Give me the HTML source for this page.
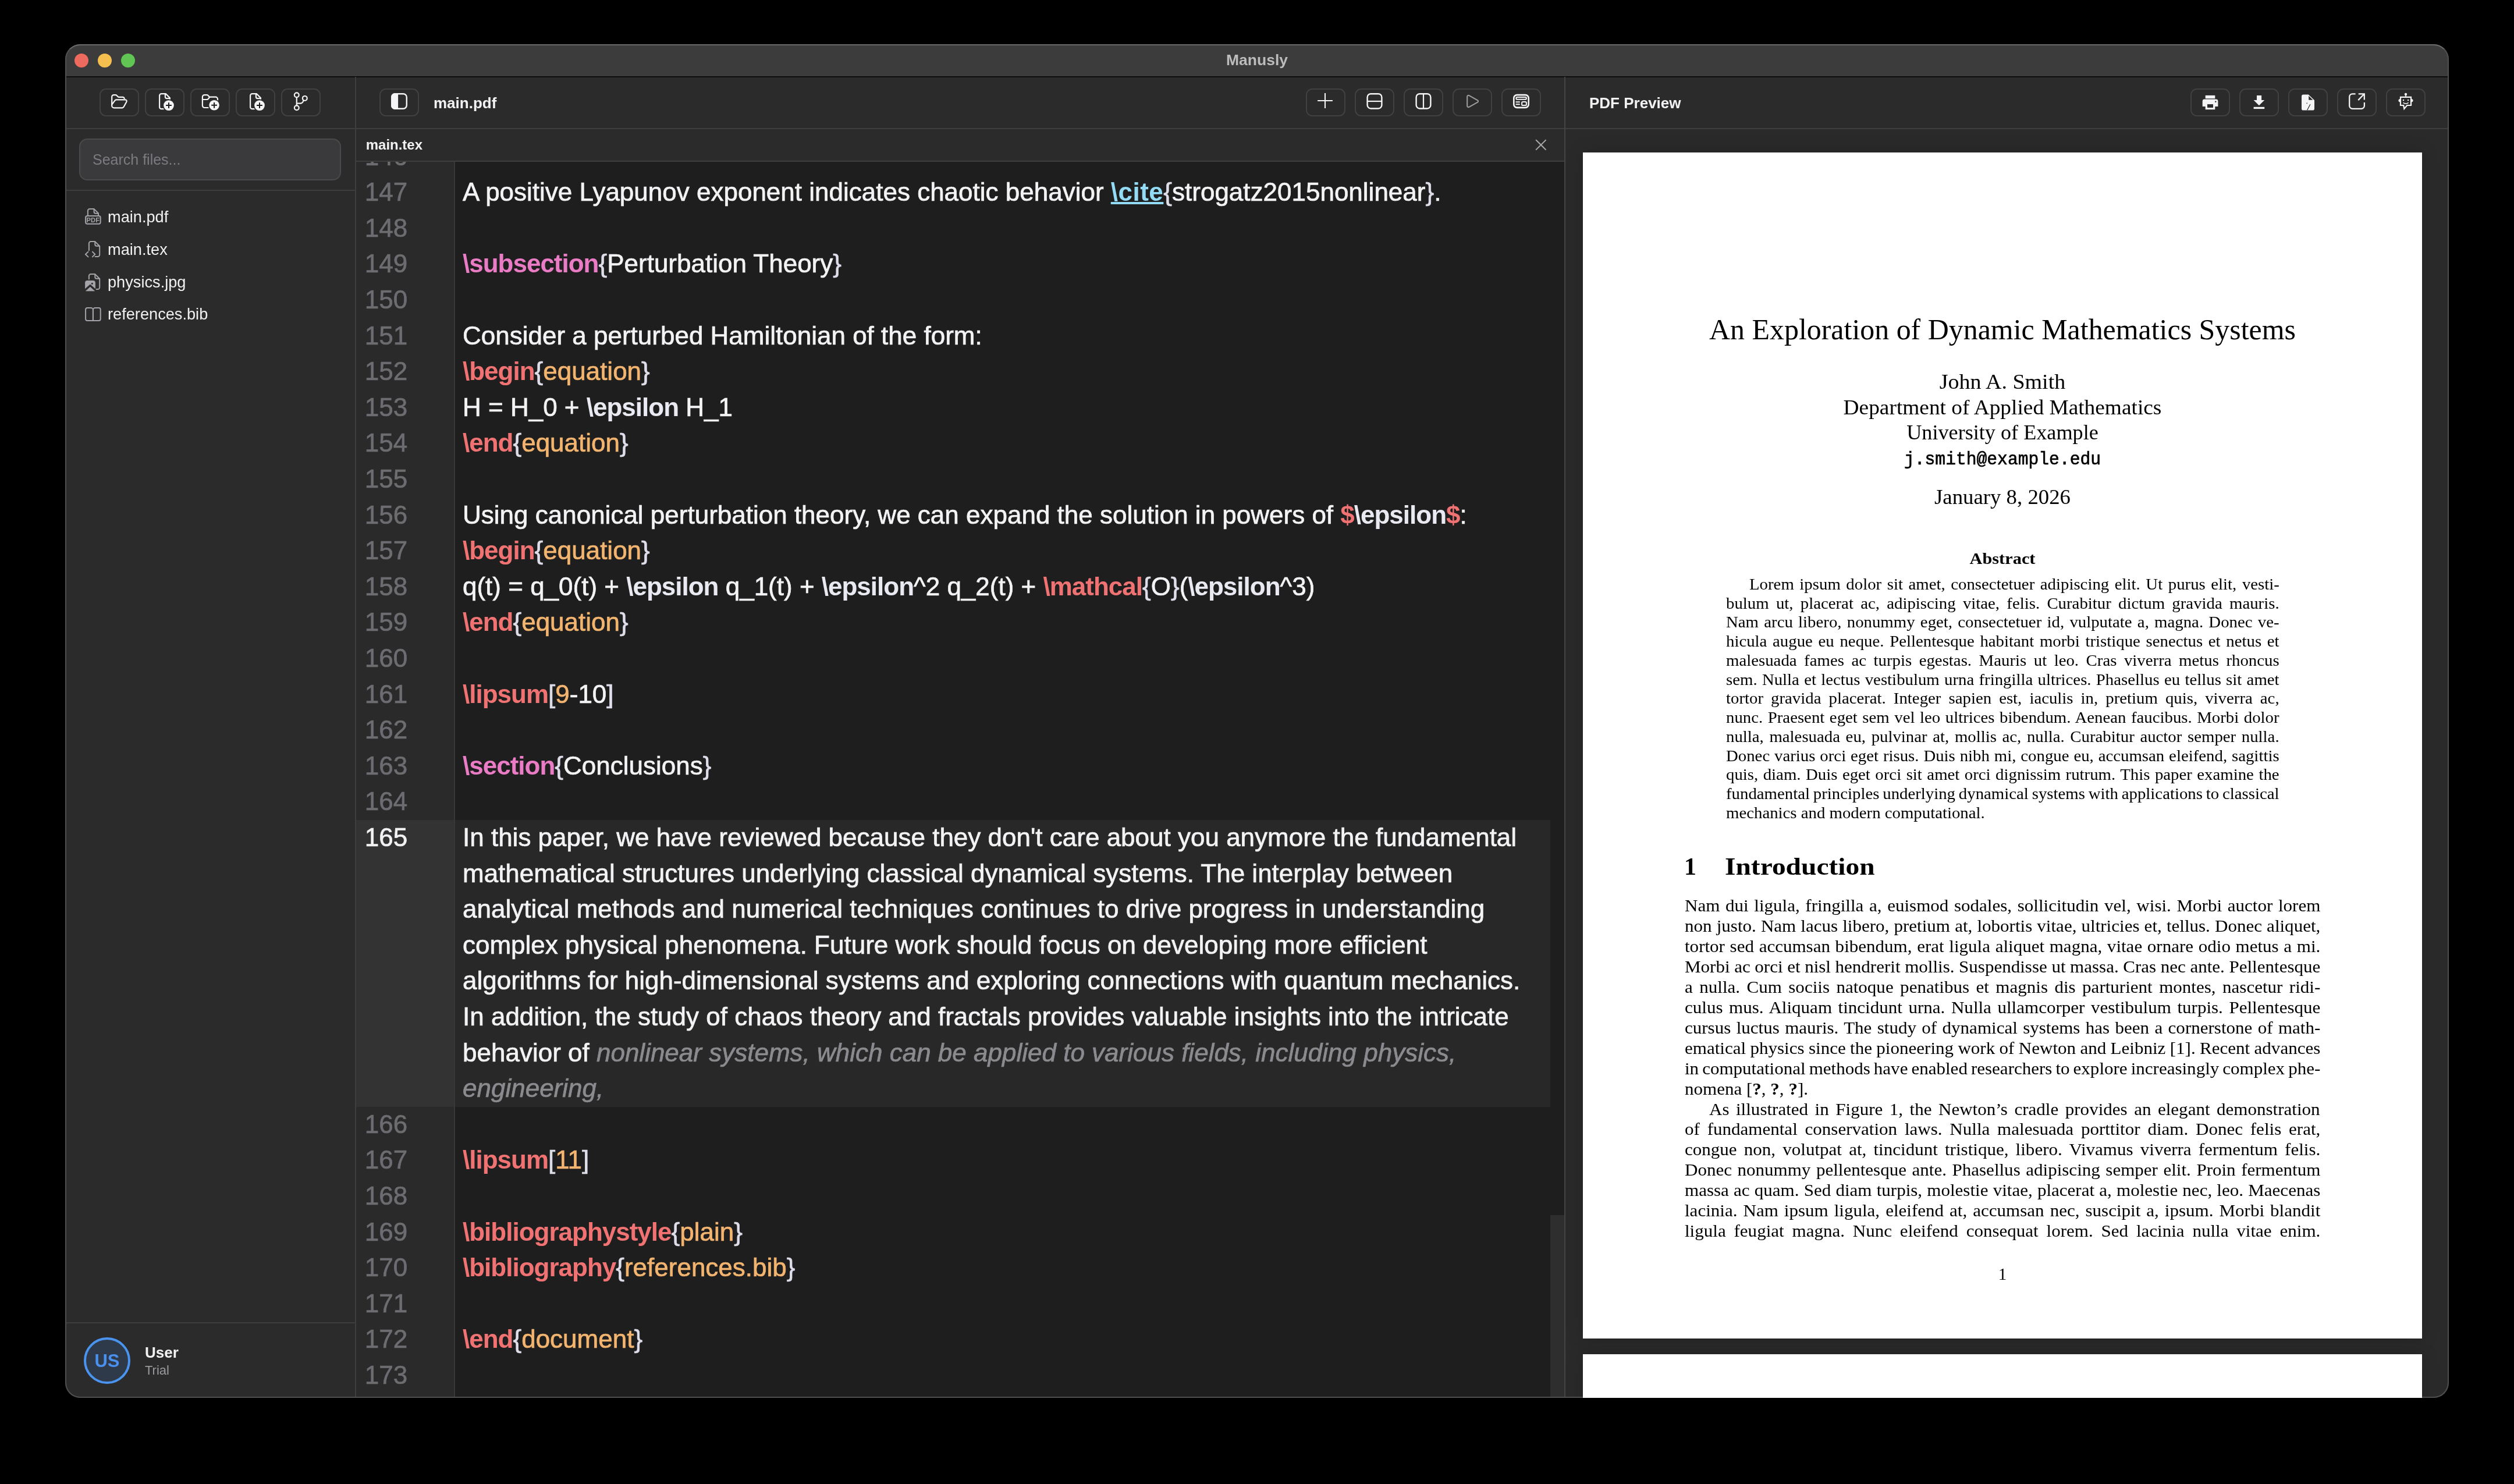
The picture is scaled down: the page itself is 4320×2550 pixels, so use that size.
<!DOCTYPE html><html><head><meta charset="utf-8"><style>
html,body{margin:0;padding:0;background:#000;width:4320px;height:2550px;overflow:hidden;}
*{box-sizing:border-box;}
body{font-family:"Liberation Sans",sans-serif;position:relative;}
#win{position:absolute;will-change:transform;left:112px;top:76px;width:4096px;height:2326px;border-radius:26px;background:#2b2b2b;overflow:hidden;}
#winborder{position:absolute;left:112px;top:76px;width:4096px;height:2326px;border-radius:26px;border:2px solid #4f4f4f;border-top-color:#6b6b6b;}
.a{position:absolute;}
.dot{position:absolute;width:24px;height:24px;border-radius:50%;}
.btn{position:absolute;width:68px;height:48px;border:2px solid #414141;border-radius:11px;}
.t{position:absolute;white-space:pre;line-height:1;}
svg{position:absolute;overflow:visible;}

.code{position:absolute;white-space:pre;font-size:44px;line-height:61.6px;color:#f3f3f5;-webkit-text-stroke-width:0.7px;}
.ln{position:absolute;white-space:pre;font-size:44px;line-height:61.6px;-webkit-text-stroke-width:0.7px;}
.kw{color:#f07272;font-weight:bold;letter-spacing:-1px;-webkit-text-stroke-width:0;}
.sec{color:#ea7bc5;font-weight:bold;letter-spacing:-1px;-webkit-text-stroke-width:0;}
.arg{color:#f2b46f;}
.br{color:#dedeea;}
.ep{color:#e9e9f2;font-weight:bold;letter-spacing:-1px;-webkit-text-stroke-width:0;}
.cite{color:#93dbf4;font-weight:bold;letter-spacing:0.5px;-webkit-text-stroke-width:0;text-decoration:underline;text-decoration-thickness:4.4px;text-underline-offset:2px;}
.gh{color:#8b8b8f;font-style:italic;}
#edclip{position:absolute;overflow:hidden;}
.pt{position:absolute;white-space:nowrap;line-height:1;color:#000;font-family:'Liberation Serif',serif;}</style></head><body><div id="win"><div class="a" style="left:0px;top:0px;width:4096px;height:55px;background:#3c3c3c;"></div>
<div class="a" style="left:0px;top:55px;width:4096px;height:2px;background:#0d0d0d;"></div>
<div class="dot" style="left:16px;top:16px;background:#ed6a5e;"></div>
<div class="dot" style="left:56px;top:16px;background:#f5bf4f;"></div>
<div class="dot" style="left:96px;top:16px;background:#61c554;"></div>
<div class="t" style="left:0;width:4096px;text-align:center;top:13.57px;font-size:26.5px;font-weight:bold;color:#bcbcbc;">Manusly</div>
<div class="a" style="left:0px;top:57px;width:4096px;height:87px;background:#2b2b2b;"></div>
<div class="a" style="left:0px;top:144px;width:4096px;height:2px;background:#3e3e3e;"></div>
<div class="a" style="left:498px;top:56px;width:2px;height:2270px;background:#3e3e3e;"></div>
<div class="a" style="left:2576px;top:56px;width:2px;height:2272px;background:#444444;"></div>
<div class="btn" style="left:59px;top:76px;"></div>
<div class="btn" style="left:137px;top:76px;"></div>
<div class="btn" style="left:215px;top:76px;"></div>
<div class="btn" style="left:293px;top:76px;"></div>
<div class="btn" style="left:371px;top:76px;"></div>
<div class="a" style="left:0px;top:250px;width:498px;height:2px;background:#3e3e3e;"></div>
<div class="a" style="left:24px;top:162px;width:450px;height:72px;background:#3a3a3c;border:2px solid #4a4a4c;border-radius:14px;"></div>
<div class="t" style="left:47px;top:185.84px;font-size:25px;color:#7b7b80;">Search files...</div>
<div class="t" style="left:73px;top:282.98px;font-size:27.2px;color:#f0f0f2;">main.pdf</div>
<div class="t" style="left:73px;top:338.78px;font-size:27.2px;color:#f0f0f2;">main.tex</div>
<div class="t" style="left:73px;top:394.58px;font-size:27.2px;color:#f0f0f2;">physics.jpg</div>
<div class="t" style="left:73px;top:450.38px;font-size:27.2px;color:#f0f0f2;">references.bib</div>
<div class="a" style="left:0px;top:2196px;width:498px;height:2px;background:#3e3e3e;"></div>
<div class="a" style="left:32px;top:2222px;width:80px;height:80px;border-radius:50%;background:#2e3949;border:4px solid #4a94f0;"></div>
<div class="t" style="left:32px;width:80px;text-align:center;top:2247.06px;font-size:31px;font-weight:bold;color:#4a90ee;">US</div>
<div class="t" style="left:137px;top:2235.19px;font-size:26px;font-weight:bold;color:#f2f2f2;">User</div>
<div class="t" style="left:137px;top:2268.18px;font-size:22px;color:#9a9a9e;">Trial</div>
<div class="btn" style="left:540px;top:76px;"></div>
<div class="t" style="left:633px;top:87.99px;font-size:26px;font-weight:bold;color:#f2f2f4;">main.pdf</div>
<div class="btn" style="left:2132px;top:76px;"></div>
<div class="btn" style="left:2216px;top:76px;"></div>
<div class="btn" style="left:2300px;top:76px;"></div>
<div class="btn" style="left:2384px;top:76px;"></div>
<div class="btn" style="left:2468px;top:76px;"></div>
<div class="a" style="left:500px;top:200px;width:2076px;height:2px;background:#3e3e3e;"></div>
<div class="t" style="left:516.7px;top:161.48px;font-size:24px;font-weight:bold;color:#f2f2f4;">main.tex</div>
<div class="t" style="left:2619px;top:88.29px;font-size:26px;font-weight:bold;color:#f2f2f4;">PDF Preview</div>
<div class="btn" style="left:3652px;top:76px;"></div>
<div class="btn" style="left:3736px;top:76px;"></div>
<div class="btn" style="left:3820px;top:76px;"></div>
<div class="btn" style="left:3904px;top:76px;"></div>
<div class="btn" style="left:3988px;top:76px;"></div>
<div class="a" style="left:500px;top:202px;width:2076px;height:2130px;background:#1e1e1e;"></div>
<div class="a" style="left:500px;top:202px;width:168px;height:2130px;background:#2a2a2a;"></div>
<div id="edclip" style="left:500px;top:202px;width:2052px;height:2122px;"><div class="ln" style="left:14.8px;top:-40.35px;color:#6c6c71;">146</div>
<div class="code" style="left:183px;top:-40.35px;"></div>
<div class="ln" style="left:14.8px;top:21.25px;color:#6c6c71;">147</div>
<div class="code" style="left:183px;top:21.25px;">A positive Lyapunov exponent indicates chaotic behavior <span class="cite">\cite</span><span class="br">{</span>strogatz2015nonlinear<span class="br">}</span>.</div>
<div class="ln" style="left:14.8px;top:82.85px;color:#6c6c71;">148</div>
<div class="code" style="left:183px;top:82.85px;"></div>
<div class="ln" style="left:14.8px;top:144.45px;color:#6c6c71;">149</div>
<div class="code" style="left:183px;top:144.45px;"><span class="sec">\subsection</span><span class="br">{</span>Perturbation Theory<span class="br">}</span></div>
<div class="ln" style="left:14.8px;top:206.05px;color:#6c6c71;">150</div>
<div class="code" style="left:183px;top:206.05px;"></div>
<div class="ln" style="left:14.8px;top:267.65px;color:#6c6c71;">151</div>
<div class="code" style="left:183px;top:267.65px;">Consider a perturbed Hamiltonian of the form:</div>
<div class="ln" style="left:14.8px;top:329.25px;color:#6c6c71;">152</div>
<div class="code" style="left:183px;top:329.25px;"><span class="kw">\begin</span><span class="br">{</span><span class="arg">equation</span><span class="br">}</span></div>
<div class="ln" style="left:14.8px;top:390.85px;color:#6c6c71;">153</div>
<div class="code" style="left:183px;top:390.85px;">H = H_0 + <span class="ep">\epsilon</span> H_1</div>
<div class="ln" style="left:14.8px;top:452.45px;color:#6c6c71;">154</div>
<div class="code" style="left:183px;top:452.45px;"><span class="kw">\end</span><span class="br">{</span><span class="arg">equation</span><span class="br">}</span></div>
<div class="ln" style="left:14.8px;top:514.05px;color:#6c6c71;">155</div>
<div class="code" style="left:183px;top:514.05px;"></div>
<div class="ln" style="left:14.8px;top:575.65px;color:#6c6c71;">156</div>
<div class="code" style="left:183px;top:575.65px;">Using canonical perturbation theory, we can expand the solution in powers of <span class="kw">$</span><span class="ep">\epsilon</span><span class="kw">$</span>:</div>
<div class="ln" style="left:14.8px;top:637.25px;color:#6c6c71;">157</div>
<div class="code" style="left:183px;top:637.25px;"><span class="kw">\begin</span><span class="br">{</span><span class="arg">equation</span><span class="br">}</span></div>
<div class="ln" style="left:14.8px;top:698.85px;color:#6c6c71;">158</div>
<div class="code" style="left:183px;top:698.85px;">q(t) = q_0(t) + <span class="ep">\epsilon</span> q_1(t) + <span class="ep">\epsilon</span>^2 q_2(t) + <span class="kw">\mathcal</span><span class="br">{</span>O<span class="br">}</span>(<span class="ep">\epsilon</span>^3)</div>
<div class="ln" style="left:14.8px;top:760.45px;color:#6c6c71;">159</div>
<div class="code" style="left:183px;top:760.45px;"><span class="kw">\end</span><span class="br">{</span><span class="arg">equation</span><span class="br">}</span></div>
<div class="ln" style="left:14.8px;top:822.05px;color:#6c6c71;">160</div>
<div class="code" style="left:183px;top:822.05px;"></div>
<div class="ln" style="left:14.8px;top:883.65px;color:#6c6c71;">161</div>
<div class="code" style="left:183px;top:883.65px;"><span class="kw">\lipsum</span><span class="br">[</span><span class="arg">9</span>-10<span class="br">]</span></div>
<div class="ln" style="left:14.8px;top:945.25px;color:#6c6c71;">162</div>
<div class="code" style="left:183px;top:945.25px;"></div>
<div class="ln" style="left:14.8px;top:1006.85px;color:#6c6c71;">163</div>
<div class="code" style="left:183px;top:1006.85px;"><span class="sec">\section</span><span class="br">{</span>Conclusions<span class="br">}</span></div>
<div class="ln" style="left:14.8px;top:1068.45px;color:#6c6c71;">164</div>
<div class="code" style="left:183px;top:1068.45px;"></div>
<div class="a" style="left:170px;top:1131.0px;width:1882px;height:492.8px;background:#282828;"></div>
<div class="a" style="left:0px;top:1131.0px;width:168px;height:492.8px;background:#333333;"></div>
<div class="ln" style="left:14.8px;top:1130.05px;color:#f2f2f4;">165</div>
<div class="code" style="left:183px;top:1130.05px;">In this paper, we have reviewed because they don't care about you anymore the fundamental<br>mathematical structures underlying classical dynamical systems. The interplay between<br>analytical methods and numerical techniques continues to drive progress in understanding<br>complex physical phenomena. Future work should focus on developing more efficient<br>algorithms for high-dimensional systems and exploring connections with quantum mechanics.<br>In addition, the study of chaos theory and fractals provides valuable insights into the intricate<br>behavior of <span class="gh">nonlinear systems, which can be applied to various fields, including physics,</span><br><span class="gh">engineering,</span></div>
<div class="ln" style="left:14.8px;top:1622.85px;color:#6c6c71;">166</div>
<div class="code" style="left:183px;top:1622.85px;"></div>
<div class="ln" style="left:14.8px;top:1684.45px;color:#6c6c71;">167</div>
<div class="code" style="left:183px;top:1684.45px;"><span class="kw">\lipsum</span><span class="br">[</span><span class="arg">11</span><span class="br">]</span></div>
<div class="ln" style="left:14.8px;top:1746.05px;color:#6c6c71;">168</div>
<div class="code" style="left:183px;top:1746.05px;"></div>
<div class="ln" style="left:14.8px;top:1807.65px;color:#6c6c71;">169</div>
<div class="code" style="left:183px;top:1807.65px;"><span class="kw">\bibliographystyle</span><span class="br">{</span><span class="arg">plain</span><span class="br">}</span></div>
<div class="ln" style="left:14.8px;top:1869.25px;color:#6c6c71;">170</div>
<div class="code" style="left:183px;top:1869.25px;"><span class="kw">\bibliography</span><span class="br">{</span><span class="arg">references.bib</span><span class="br">}</span></div>
<div class="ln" style="left:14.8px;top:1930.85px;color:#6c6c71;">171</div>
<div class="code" style="left:183px;top:1930.85px;"></div>
<div class="ln" style="left:14.8px;top:1992.45px;color:#6c6c71;">172</div>
<div class="code" style="left:183px;top:1992.45px;"><span class="kw">\end</span><span class="br">{</span><span class="arg">document</span><span class="br">}</span></div>
<div class="ln" style="left:14.8px;top:2054.05px;color:#6c6c71;">173</div>
<div class="code" style="left:183px;top:2054.05px;"></div>
<div class="ln" style="left:14.8px;top:2115.65px;color:#6c6c71;">174</div>
<div class="code" style="left:183px;top:2115.65px;"></div>
<div class="a" style="left:168px;top:0;width:2px;height:2130px;background:#383838;"></div></div>
<div class="a" style="left:2552px;top:2012px;width:24px;height:320px;background:#2e2e2e;"></div>
<div class="a" style="left:2578px;top:146px;width:1516px;height:2180px;background:#2a2a2a;"></div>
<div class="a" style="left:2608px;top:186px;width:1442px;height:2038px;background:#ffffff;box-shadow:0 0 28px rgba(0,0,0,0.18);"></div>
<div class="a" style="left:2608px;top:2251px;width:1442px;height:200px;background:#ffffff;box-shadow:0 0 28px rgba(0,0,0,0.18);"></div>
<div class="pt" style="left:2608px;width:1442px;text-align:center;top:464.73px;font-size:50px;font-family:'Liberation Serif',serif;transform:scaleX(0.9985);transform-origin:50% 0;">An Exploration of Dynamic Mathematics Systems</div>
<div class="pt" style="left:2608px;width:1442px;text-align:center;top:563.19px;font-size:35px;font-family:'Liberation Serif',serif;transform:scaleX(1.086);transform-origin:50% 0;">John A. Smith</div>
<div class="pt" style="left:2608px;width:1442px;text-align:center;top:607.09px;font-size:35px;font-family:'Liberation Serif',serif;transform:scaleX(1.0675);transform-origin:50% 0;">Department of Applied Mathematics</div>
<div class="pt" style="left:2608px;width:1442px;text-align:center;top:649.99px;font-size:35px;font-family:'Liberation Serif',serif;transform:scaleX(1.0336);transform-origin:50% 0;">University of Example</div>
<div class="pt" style="left:2608px;width:1442px;text-align:center;top:697.77px;font-size:32px;font-family:'Liberation Mono',monospace;transform:scaleX(0.9264);transform-origin:50% 0;-webkit-text-stroke:0.7px #000;">j.smith@example.edu</div>
<div class="pt" style="left:2608px;width:1442px;text-align:center;top:760.89px;font-size:35px;font-family:'Liberation Serif',serif;transform:scaleX(1.051);transform-origin:50% 0;">January 8, 2026</div>
<div class="pt" style="left:2608px;width:1442px;text-align:center;top:870.99px;font-size:27px;font-family:'Liberation Serif',serif;transform:scaleX(1.1245);transform-origin:50% 0;"><b>Abstract</b></div>
<div class="pt" style="left:2893.6px;top:914.81px;font-size:26.5px;word-spacing:2.184px;transform:scaleX(1.087);transform-origin:0 0;">Lorem ipsum dolor sit amet, consectetuer adipiscing elit. Ut purus elit, vesti-</div>
<div class="pt" style="left:2853.9px;top:947.57px;font-size:26.5px;word-spacing:4.663px;transform:scaleX(1.087);transform-origin:0 0;">bulum ut, placerat ac, adipiscing vitae, felis. Curabitur dictum gravida mauris.</div>
<div class="pt" style="left:2853.9px;top:980.33px;font-size:26.5px;word-spacing:1.904px;transform:scaleX(1.087);transform-origin:0 0;">Nam arcu libero, nonummy eget, consectetuer id, vulputate a, magna. Donec ve-</div>
<div class="pt" style="left:2853.9px;top:1013.09px;font-size:26.5px;word-spacing:2.3px;transform:scaleX(1.087);transform-origin:0 0;">hicula augue eu neque. Pellentesque habitant morbi tristique senectus et netus et</div>
<div class="pt" style="left:2853.9px;top:1045.85px;font-size:26.5px;word-spacing:4.908px;transform:scaleX(1.087);transform-origin:0 0;">malesuada fames ac turpis egestas. Mauris ut leo. Cras viverra metus rhoncus</div>
<div class="pt" style="left:2853.9px;top:1078.61px;font-size:26.5px;word-spacing:0.998px;transform:scaleX(1.087);transform-origin:0 0;">sem. Nulla et lectus vestibulum urna fringilla ultrices. Phasellus eu tellus sit amet</div>
<div class="pt" style="left:2853.9px;top:1111.37px;font-size:26.5px;word-spacing:5.382px;transform:scaleX(1.087);transform-origin:0 0;">tortor gravida placerat. Integer sapien est, iaculis in, pretium quis, viverra ac,</div>
<div class="pt" style="left:2853.9px;top:1144.13px;font-size:26.5px;word-spacing:1.226px;transform:scaleX(1.087);transform-origin:0 0;">nunc. Praesent eget sem vel leo ultrices bibendum. Aenean faucibus. Morbi dolor</div>
<div class="pt" style="left:2853.9px;top:1176.89px;font-size:26.5px;word-spacing:2.232px;transform:scaleX(1.087);transform-origin:0 0;">nulla, malesuada eu, pulvinar at, mollis ac, nulla. Curabitur auctor semper nulla.</div>
<div class="pt" style="left:2853.9px;top:1209.65px;font-size:26.5px;word-spacing:0.634px;transform:scaleX(1.087);transform-origin:0 0;">Donec varius orci eget risus. Duis nibh mi, congue eu, accumsan eleifend, sagittis</div>
<div class="pt" style="left:2853.9px;top:1242.41px;font-size:26.5px;word-spacing:1.184px;transform:scaleX(1.087);transform-origin:0 0;">quis, diam. Duis eget orci sit amet orci dignissim rutrum. This paper examine the</div>
<div class="pt" style="left:2853.9px;top:1275.17px;font-size:26.5px;word-spacing:-1.26px;transform:scaleX(1.087);transform-origin:0 0;">fundamental principles underlying dynamical systems with applications to classical</div>
<div class="pt" style="left:2853.9px;top:1307.93px;font-size:26.5px;word-spacing:0px;transform:scaleX(1.087);transform-origin:0 0;">mechanics and modern computational.</div>
<div class="pt" style="left:2782px;top:1392.33px;font-size:42px;font-weight:bold;">1</div>
<div class="pt" style="left:2852px;top:1392.33px;font-size:42px;font-weight:bold;transform:scaleX(1.13);transform-origin:0 0;">Introduction</div>
<div class="pt" style="left:2782.7px;top:1466.11px;font-size:29px;word-spacing:1.776px;transform:scaleX(1.07);transform-origin:0 0;">Nam dui ligula, fringilla a, euismod sodales, sollicitudin vel, wisi. Morbi auctor lorem</div>
<div class="pt" style="left:2782.7px;top:1501.05px;font-size:29px;word-spacing:0.344px;transform:scaleX(1.07);transform-origin:0 0;">non justo. Nam lacus libero, pretium at, lobortis vitae, ultricies et, tellus. Donec aliquet,</div>
<div class="pt" style="left:2782.7px;top:1535.99px;font-size:29px;word-spacing:0.845px;transform:scaleX(1.07);transform-origin:0 0;">tortor sed accumsan bibendum, erat ligula aliquet magna, vitae ornare odio metus a mi.</div>
<div class="pt" style="left:2782.7px;top:1570.93px;font-size:29px;word-spacing:-0.154px;transform:scaleX(1.07);transform-origin:0 0;">Morbi ac orci et nisl hendrerit mollis. Suspendisse ut massa. Cras nec ante. Pellentesque</div>
<div class="pt" style="left:2782.7px;top:1605.87px;font-size:29px;word-spacing:3.457px;transform:scaleX(1.07);transform-origin:0 0;">a nulla. Cum sociis natoque penatibus et magnis dis parturient montes, nascetur ridi-</div>
<div class="pt" style="left:2782.7px;top:1640.81px;font-size:29px;word-spacing:2.635px;transform:scaleX(1.07);transform-origin:0 0;">culus mus. Aliquam tincidunt urna. Nulla ullamcorper vestibulum turpis. Pellentesque</div>
<div class="pt" style="left:2782.7px;top:1675.75px;font-size:29px;word-spacing:1.5px;transform:scaleX(1.07);transform-origin:0 0;">cursus luctus mauris. The study of dynamical systems has been a cornerstone of math-</div>
<div class="pt" style="left:2782.7px;top:1710.69px;font-size:29px;word-spacing:-0.357px;transform:scaleX(1.07);transform-origin:0 0;">ematical physics since the pioneering work of Newton and Leibniz [1]. Recent advances</div>
<div class="pt" style="left:2782.7px;top:1745.63px;font-size:29px;word-spacing:-1.635px;transform:scaleX(1.07);transform-origin:0 0;">in computational methods have enabled researchers to explore increasingly complex phe-</div>
<div class="pt" style="left:2782.7px;top:1780.57px;font-size:29px;word-spacing:0px;transform:scaleX(1.07);transform-origin:0 0;">nomena [<b>?</b>, <b>?</b>, <b>?</b>].</div>
<div class="pt" style="left:2825.4px;top:1815.51px;font-size:29px;word-spacing:3.514px;transform:scaleX(1.07);transform-origin:0 0;">As illustrated in Figure 1, the Newton&#8217;s cradle provides an elegant demonstration</div>
<div class="pt" style="left:2782.7px;top:1850.45px;font-size:29px;word-spacing:4.723px;transform:scaleX(1.07);transform-origin:0 0;">of fundamental conservation laws. Nulla malesuada porttitor diam. Donec felis erat,</div>
<div class="pt" style="left:2782.7px;top:1885.39px;font-size:29px;word-spacing:4.136px;transform:scaleX(1.07);transform-origin:0 0;">congue non, volutpat at, tincidunt tristique, libero. Vivamus viverra fermentum felis.</div>
<div class="pt" style="left:2782.7px;top:1920.33px;font-size:29px;word-spacing:1.658px;transform:scaleX(1.07);transform-origin:0 0;">Donec nonummy pellentesque ante. Phasellus adipiscing semper elit. Proin fermentum</div>
<div class="pt" style="left:2782.7px;top:1955.27px;font-size:29px;word-spacing:0.414px;transform:scaleX(1.07);transform-origin:0 0;">massa ac quam. Sed diam turpis, molestie vitae, placerat a, molestie nec, leo. Maecenas</div>
<div class="pt" style="left:2782.7px;top:1990.21px;font-size:29px;word-spacing:2.118px;transform:scaleX(1.07);transform-origin:0 0;">lacinia. Nam ipsum ligula, eleifend at, accumsan nec, suscipit a, ipsum. Morbi blandit</div>
<div class="pt" style="left:2782.7px;top:2025.15px;font-size:29px;word-spacing:5.687px;transform:scaleX(1.07);transform-origin:0 0;">ligula feugiat magna. Nunc eleifend consequat lorem. Sed lacinia nulla vitae enim.</div>
<div class="pt" style="left:2608px;width:1442px;text-align:center;top:2098.91px;font-size:29px;font-family:'Liberation Serif',serif;">1</div>
<svg style="left:68px;top:74px" width="50" height="50" viewBox="180 150 50 50"><path fill="none" stroke="#f4f4f6" stroke-width="2.2" stroke-linecap="round" stroke-linejoin="round" d="M192.2 180 V166.4 a3.3 3.3 0 0 1 3.3 -3.3 h3.4 a1.8 1.8 0 0 1 1.3 0.55 l2.6 2.7 a1.8 1.8 0 0 0 1.3 0.55 h6.6 a3.2 3.2 0 0 1 3 2.2"/>
<path fill="none" stroke="#f4f4f6" stroke-width="2.2" stroke-linecap="round" stroke-linejoin="round" d="M192.6 179.2 L197.1 173.1 a3.4 3.4 0 0 1 2.6 -1.8 H215.3 a2.4 2.4 0 0 1 2.1 3.6 L212.7 183.6 a3.2 3.2 0 0 1 -2.8 1.7 H196 a3.8 3.8 0 0 1 -3.8 -3.8 V179"/></svg>
<svg style="left:148px;top:74px" width="50" height="50" viewBox="260 150 50 50"><path fill="none" stroke="#f4f4f6" stroke-width="2.2" stroke-linecap="round" stroke-linejoin="round" d="M281 187.2 h-3.6 a3.3 3.3 0 0 1 -3.3 -3.3 V164.4 a3.3 3.3 0 0 1 3.3 -3.3 h7.4 l7.1 7.1 V172"/>
<path fill="none" stroke="#f4f4f6" stroke-width="2.2" stroke-linecap="round" stroke-linejoin="round" d="M283.9 161.4 V166.6 a2.5 2.5 0 0 0 2.5 2.5 H292"/>
<circle cx="290" cy="181.1" r="10.6" fill="#2b2b2b"/><circle cx="290" cy="181.1" r="8.9" fill="#f4f4f6"/>
<path d="M285.1 181.1 h9.8 M290 176.2 v9.8" stroke="#1b1b1b" stroke-width="2" stroke-linecap="butt"/></svg>
<svg style="left:304px;top:74px" width="50" height="50" viewBox="416 150 50 50"><path fill="none" stroke="#f4f4f6" stroke-width="2.2" stroke-linecap="round" stroke-linejoin="round" d="M437 187.2 h-3.6 a3.3 3.3 0 0 1 -3.3 -3.3 V164.4 a3.3 3.3 0 0 1 3.3 -3.3 h7.4 l7.1 7.1 V172"/>
<path fill="none" stroke="#f4f4f6" stroke-width="2.2" stroke-linecap="round" stroke-linejoin="round" d="M439.9 161.4 V166.6 a2.5 2.5 0 0 0 2.5 2.5 H448"/>
<circle cx="446" cy="181.1" r="10.6" fill="#2b2b2b"/><circle cx="446" cy="181.1" r="8.9" fill="#f4f4f6"/>
<path d="M441.1 181.1 h9.8 M446 176.2 v9.8" stroke="#1b1b1b" stroke-width="2" stroke-linecap="butt"/></svg>
<svg style="left:228px;top:74px" width="50" height="50" viewBox="340 150 50 50"><path fill="none" stroke="#f4f4f6" stroke-width="2.2" stroke-linecap="round" stroke-linejoin="round" d="M358 185 h-6.6 a3.5 3.5 0 0 1 -3.5 -3.5 V166.6 a3.5 3.5 0 0 1 3.5 -3.5 h4.4 a2 2 0 0 1 1.4 0.6 l2.9 3 H370.5 a3.5 3.5 0 0 1 3.5 3.5 v1.6"/>
<path fill="none" stroke="#f4f4f6" stroke-width="2.2" stroke-linecap="round" stroke-linejoin="round" d="M348.2 171 h7.6 a2 2 0 0 0 1.4 -0.6 l3 -3.3"/>
<circle cx="368.1" cy="180.8" r="10.5" fill="#2b2b2b"/><circle cx="368.1" cy="180.8" r="8.8" fill="#f4f4f6"/>
<path d="M363.2 180.8 h9.8 M368.1 175.9 v9.8" stroke="#1b1b1b" stroke-width="2"/></svg>
<svg style="left:383px;top:74px" width="40" height="50" viewBox="495 150 40 50"><circle fill="none" stroke="#f4f4f6" stroke-width="2.2" stroke-linecap="round" stroke-linejoin="round" cx="509.8" cy="163.2" r="3.9"/><circle fill="none" stroke="#f4f4f6" stroke-width="2.2" stroke-linecap="round" stroke-linejoin="round" cx="509.8" cy="185.3" r="3.9"/><circle fill="none" stroke="#f4f4f6" stroke-width="2.2" stroke-linecap="round" stroke-linejoin="round" cx="523.8" cy="168.9" r="3.9"/>
<path fill="none" stroke="#f4f4f6" stroke-width="2.2" stroke-linecap="round" stroke-linejoin="round" d="M509.8 167.1 V181.4 M521.4 172 a6 6 0 0 1 -4.6 5.6 H509.8"/></svg>
<svg style="left:548px;top:74px" width="50" height="50" viewBox="660 150 50 50"><rect x="673.2" y="161.2" width="25.6" height="25.6" rx="6" fill="none" stroke="#f4f4f6" stroke-width="2.4"/>
<path d="M678.5 160 H684.1 V188 H678.5 a6.5 6.5 0 0 1 -6.5 -6.5 V166.5 a6.5 6.5 0 0 1 6.5 -6.5 z" fill="#f4f4f6"/></svg>
<svg style="left:2143px;top:74px" width="45" height="50" viewBox="2255 150 45 50"><path d="M2264.1 173 H2289.9 M2277 160.1 V185.9" stroke="#f4f4f6" stroke-width="2.1"/></svg>
<svg style="left:2228px;top:74px" width="45" height="50" viewBox="2340 150 45 50"><rect x="2349.6" y="161.2" width="24.8" height="25.3" rx="6" fill="none" stroke="#f4f4f6" stroke-width="2.4"/>
<path d="M2349.6 174 H2374.4" stroke="#f4f4f6" stroke-width="2.2"/></svg>
<svg style="left:2313px;top:74px" width="45" height="50" viewBox="2425 150 45 50"><rect x="2433.6" y="161.2" width="24.8" height="25.3" rx="6" fill="none" stroke="#f4f4f6" stroke-width="2.4"/>
<path d="M2446 161.2 V186.5" stroke="#f4f4f6" stroke-width="2.2"/></svg>
<svg style="left:2398px;top:74px" width="45" height="50" viewBox="2510 150 45 50"><path d="M2521.2 166 v15.9 a2.2 2.2 0 0 0 3.3 1.9 l14.6 -8.1 a2 2 0 0 0 0 -3.4 l-14.6 -8.1 a2.2 2.2 0 0 0 -3.3 1.8 z" fill="none" stroke="#9c9c9c" stroke-width="2.1" stroke-linejoin="round"/></svg>
<svg style="left:2478px;top:74px" width="50" height="50" viewBox="2590 150 50 50"><rect x="2601.3" y="163.1" width="25.4" height="21.8" rx="5.5" fill="none" stroke="#f4f4f6" stroke-width="2.6"/>
<rect x="2605.3" y="167.1" width="17.6" height="3.6" rx="1.8" fill="none" stroke="#f4f4f6" stroke-width="2"/>
<path d="M2604.6 175.3 H2611.8 M2604.6 179.3 H2611.8" stroke="#f4f4f6" stroke-width="1.9"/>
<rect x="2615.1" y="175.1" width="7.8" height="6" rx="1.6" fill="none" stroke="#f4f4f6" stroke-width="2"/></svg>
<svg style="left:2518px;top:154px" width="40" height="40" viewBox="2630 230 40 40"><path d="M2639.2 240.2 L2656.6 257.6 M2656.6 240.2 L2639.2 257.6" stroke="#a8a8a8" stroke-width="2"/></svg>
<svg style="left:3663px;top:74px" width="50" height="50" viewBox="3775 150 50 50"><rect x="3789.7" y="163.9" width="16.6" height="5.4" fill="#f4f4f6"/>
<path d="M3784.7 183.1 V174 a3.4 3.4 0 0 1 3.4 -3.4 h19.9 a3.4 3.4 0 0 1 3.4 3.4 V183.1 z" fill="#f4f4f6"/>
<rect x="3789.7" y="179.1" width="16.6" height="9.1" fill="#f4f4f6"/>
<rect x="3793" y="179.1" width="10" height="5.9" fill="#2b2b2b"/>
<circle cx="3807.3" cy="174.8" r="1.2" fill="#2b2b2b"/></svg>
<svg style="left:3748px;top:74px" width="50" height="50" viewBox="3860 150 50 50"><path d="M3878 163.9 H3886.1 V172 H3891.2 L3881.9 181.2 L3872.6 172 H3878 z" fill="#f4f4f6"/>
<rect x="3872.6" y="183.8" width="18.6" height="3.3" fill="#f4f4f6"/></svg>
<svg style="left:3833px;top:74px" width="50" height="50" viewBox="3945 150 50 50"><path d="M3958.2 162.5 H3966.8 L3977 172.2 V186.4 a3.2 3.2 0 0 1 -3.2 3.2 H3958.2 a3.2 3.2 0 0 1 -3.2 -3.2 V165.7 a3.2 3.2 0 0 1 3.2 -3.2 z" fill="#f4f4f6"/>
<path d="M3967.2 164.8 V171.8 H3974.4 z" fill="#2b2b2b"/>
<path d="M3969.9 179.2 L3964.6 189.2" stroke="#2b2b2b" stroke-width="1.3"/>
<circle cx="3964.2" cy="177.4" r="0.8" fill="#2b2b2b"/></svg>
<svg style="left:3918px;top:74px" width="45" height="50" viewBox="4030 150 45 50"><path d="M4047.6 161.3 H4042.4 a5.2 5.2 0 0 0 -5.2 5.2 V181.6 a5.2 5.2 0 0 0 5.2 5.2 H4057.7 a5.2 5.2 0 0 0 5.2 -5.2 V176" fill="none" stroke="#f4f4f6" stroke-width="2.3"/>
<path d="M4052.8 161.3 H4062.8 V171.6 M4052.3 172.1 L4062.3 161.8" fill="none" stroke="#f4f4f6" stroke-width="2.3"/></svg>
<svg style="left:4003px;top:74px" width="40" height="50" viewBox="4115 150 40 50"><path d="M4125 166.9 H4143 V181 H4136.2 L4131.3 186.9 L4130.2 181 H4125 Z" fill="none" stroke="#f4f4f6" stroke-width="2.2" stroke-linejoin="miter"/>
<circle cx="4134" cy="161.9" r="2.2" fill="#f4f4f6"/><path d="M4134 163 V166" stroke="#f4f4f6" stroke-width="1.6"/>
<path d="M4124 170.6 a2.2 2.2 0 0 0 0 4.4 z M4144 170.6 a2.2 2.2 0 0 1 0 4.4 z" fill="#f4f4f6" stroke="#f4f4f6" stroke-width="1"/>
<rect x="4128.9" y="171" width="2.2" height="2.2" fill="#f4f4f6"/><rect x="4137" y="171" width="2.2" height="2.2" fill="#f4f4f6"/>
<path d="M4129.6 176.3 Q4134 179.8 4138.6 176.3" fill="none" stroke="#f4f4f6" stroke-width="1.6"/>
</svg>
<svg style="left:28px;top:274px" width="40" height="45" viewBox="140 350 40 45"><path fill="none" stroke="#a3a3a9" stroke-width="2" stroke-linecap="round" stroke-linejoin="round" d="M150.9 370.2 V362.3 a3.2 3.2 0 0 1 3.2 -3.2 h7.5 l7.4 7.4 V370.2"/>
<path fill="none" stroke="#a3a3a9" stroke-width="2" stroke-linecap="round" stroke-linejoin="round" d="M161.6 359.4 V364 a2.8 2.8 0 0 0 2.8 2.8 H168.8"/>
<rect x="147.1" y="370.9" width="25.6" height="13.8" rx="3" fill="none" stroke="#a3a3a9" stroke-width="2" stroke-linecap="round" stroke-linejoin="round"/>
<text x="159.9" y="381.9" text-anchor="middle" font-family="Liberation Sans" font-weight="bold" font-size="11.2" fill="#a3a3a9" letter-spacing="0.2">PDF</text></svg>
<svg style="left:28px;top:329px" width="40" height="45" viewBox="140 405 40 45"><path fill="none" stroke="#a3a3a9" stroke-width="2" stroke-linecap="round" stroke-linejoin="round" d="M152.9 430.2 V418.3 a3.2 3.2 0 0 1 3.2 -3.2 h7.2 l7.9 7.9 V437.8 a3.2 3.2 0 0 1 -3.2 3.2 H163.6"/>
<path fill="none" stroke="#a3a3a9" stroke-width="2" stroke-linecap="round" stroke-linejoin="round" d="M163.3 415.4 V420 a2.8 2.8 0 0 0 2.8 2.8 H170.9"/>
<path fill="none" stroke="#a3a3a9" stroke-width="2" stroke-linecap="round" stroke-linejoin="round" d="M151.5 432.6 L146.9 437 L151.5 441.4 M158.9 432.6 L163.3 437 L158.9 441.4"/></svg>
<svg style="left:28px;top:384px" width="40" height="45" viewBox="140 460 40 45"><path fill="none" stroke="#a3a3a9" stroke-width="2" stroke-linecap="round" stroke-linejoin="round" d="M152.9 479.6 V474.3 a3.2 3.2 0 0 1 3.2 -3.2 h7.2 l7.9 7.9 V493.9 a3.2 3.2 0 0 1 -3.2 3.2 H165.6"/>
<path fill="none" stroke="#a3a3a9" stroke-width="2" stroke-linecap="round" stroke-linejoin="round" d="M163.3 471.4 V476 a2.8 2.8 0 0 0 2.8 2.8 H170.9"/>
<path d="M146.1 496.3 V485.9 a4 4 0 0 1 4 -4 H159.9 a4 4 0 0 1 4 4 V496.3 L155 488.6 Z" fill="#a3a3a9"/>
<path d="M147.6 499.9 L155 493.3 L162.4 499.9 Z" fill="#a3a3a9" stroke="#a3a3a9" stroke-width="0.8" stroke-linejoin="round"/>
<circle cx="158.3" cy="487.3" r="1.5" fill="#2b2b2b"/></svg>
<svg style="left:28px;top:444px" width="40" height="40" viewBox="140 520 40 40"><path fill="none" stroke="#a3a3a9" stroke-width="2" stroke-linecap="round" stroke-linejoin="round" d="M150.1 529.1 H156.4 a3.5 3.5 0 0 1 3.5 3.5 V551 H150.1 a3 3 0 0 1 -3 -3 V532.1 a3 3 0 0 1 3 -3 z"/>
<path fill="none" stroke="#a3a3a9" stroke-width="2" stroke-linecap="round" stroke-linejoin="round" d="M163.4 529.1 H169.7 a3 3 0 0 1 3 3 V548 a3 3 0 0 1 -3 3 H159.9 V532.6 a3.5 3.5 0 0 1 3.5 -3.5 z"/></svg></div><div id="winborder"></div><div style="position:absolute;left:2720px;top:2398px;width:1442px;height:4px;background:#fff;"></div></body></html>
